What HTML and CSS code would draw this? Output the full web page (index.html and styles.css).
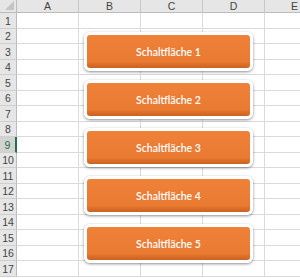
FILE: index.html
```html
<!DOCTYPE html>
<html>

<head>
    <link rel="stylesheet" href="styles.css">
</head>

<body>
    <div class="sheet-wrap">
        <div id="sheet" class="sheet"></div>
        <div class="shapes">
            <div class="shape-button">Schaltfläche 1</div>
            <div class="shape-button">Schaltfläche 2</div>
            <div class="shape-button">Schaltfläche 3</div>
            <div class="shape-button">Schaltfläche 4</div>
            <div class="shape-button">Schaltfläche 5</div>
        </div>
    </div>
    <script>
        const columns = ['A', 'B', 'C', 'D', 'E'];
        const rowCount = 17;
        const selectedRow = 9;

        function buildSheet() {
            const sheet = document.getElementById('sheet');

            // Corner cell
            const corner = document.createElement('div');
            corner.className = 'corner';
            sheet.appendChild(corner);

            // Column headers
            for (const col of columns) {
                const head = document.createElement('div');
                head.className = 'col-head';
                head.textContent = col;
                sheet.appendChild(head);
            }

            // Rows
            for (let r = 1; r <= rowCount; r++) {
                const head = document.createElement('div');
                head.className = 'row-head';
                if (r === selectedRow) head.classList.add('selected');
                head.textContent = r;
                sheet.appendChild(head);

                for (let c = 0; c < columns.length; c++) {
                    const cell = document.createElement('div');
                    cell.className = 'cell';
                    sheet.appendChild(cell);
                }
            }
        }

        buildSheet();
    </script>
</body>

</html>
```

FILE: styles.css
```css
body {
    margin: 0;
    background: white;
    font-family: "Liberation Sans", Arial, sans-serif;
}

.sheet-wrap {
    position: relative;
    width: 300px;
    height: 278px;
    overflow: hidden;
}

.sheet {
    display: grid;
    grid-template-columns: 17px repeat(4, 62px) 60px;
    grid-template-rows: 13px repeat(8, 16px 15px) 16px;
}

.corner,
.col-head,
.row-head {
    background: #e6e6e6;
    color: #444;
    font-size: 10.5px;
    display: flex;
    align-items: center;
    justify-content: center;
    box-sizing: border-box;
}

.corner {
    position: relative;
    border-right: 1px solid #bcbcbc;
    border-bottom: 1px solid #bcbcbc;
}

.corner::after {
    content: '';
    position: absolute;
    right: 2px;
    bottom: 2px;
    border-left: 9px solid transparent;
    border-bottom: 9px solid #c4c4c4;
}

.col-head {
    border-right: 1px solid #c8c8c8;
    border-bottom: 1px solid #bcbcbc;
}

.row-head {
    border-right: 1px solid #bcbcbc;
    border-bottom: 1px solid #cfcfcf;
}

.row-head.selected {
    background: #d2d2d2;
    color: #217346;
    border-right: 2px solid #217346;
}

.cell {
    border-right: 1px solid #dadada;
    border-bottom: 1px solid #dadada;
    box-sizing: border-box;
}

.shapes {
    position: absolute;
    left: 84px;
    top: 32px;
    display: flex;
    flex-direction: column;
    gap: 9px;
}

.shape-button {
    width: 163px;
    height: 33px;
    border: 3px solid white;
    border-radius: 6px;
    background: linear-gradient(to bottom, #ef8138 0%, #ea7a31 80%, #c9621f 100%);
    box-shadow: 0 1px 3px rgba(0, 0, 0, 0.45);
    color: white;
    font-family: Lato, "Open Sans", sans-serif;
    font-size: 10.5px;
    font-weight: 600;
    display: flex;
    align-items: center;
    justify-content: center;
}
```
